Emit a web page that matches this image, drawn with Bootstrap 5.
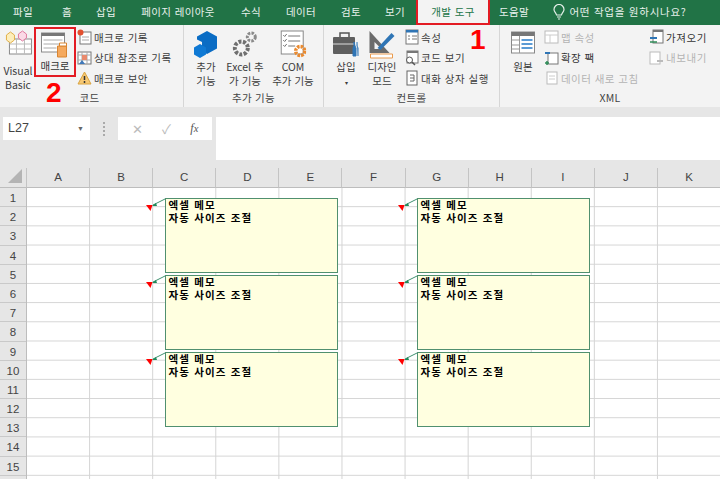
<!DOCTYPE html>
<html lang="ko"><head><meta charset="utf-8"><title>Excel 개발 도구</title>
<link href="https://cdn.jsdelivr.net/npm/bootstrap@5.3.0/dist/css/bootstrap.min.css" rel="stylesheet">
<style>
html,body{margin:0;width:720px;height:479px;overflow:hidden;background:#fff}
body{font-family:"Noto Sans CJK KR","Liberation Sans",sans-serif;font-size:10.5px;line-height:13px;color:#3c3c3c;position:relative}
.tabbar{height:25px;background:#217346;color:#e8f1ec;position:relative}
.tb{position:absolute;top:0;height:25px;line-height:23px;transform:translateX(-50%);white-space:nowrap;letter-spacing:.35px}
.tb-active{left:416px;width:74px;transform:none;background:#f3f3f3;color:#217346;border:2.5px solid #e31b23;border-top:0;text-align:center;line-height:23px;height:25px;z-index:2}
.tb-ask{letter-spacing:.75px}
.ribbon{height:82px;background:#f3f3f3;position:relative}
.grp{height:82px;border-right:1px solid #d6d6d6;position:relative;flex:none}
.grplabel{position:absolute;bottom:3px;left:0;right:0;text-align:center;color:#444;letter-spacing:.3px}
.bigb{position:absolute;top:5px;text-align:center;transform:translateX(-50%);white-space:nowrap;line-height:14px}
.bigb svg{display:block;margin:0 auto 1px}
.smalls{position:absolute;top:2px;display:flex;flex-direction:column;white-space:nowrap;letter-spacing:.45px}
.smalls>div{height:20.5px;display:flex;align-items:center;gap:2px}
.muted{color:#b3b3b3}
.fbar{height:61px;background:#e6e6e6;position:relative}
.fbox{position:absolute;top:10px;height:23px;background:#fff;display:flex;align-items:center}
.namebox{left:3px;width:87px;padding-left:5px;font-family:"Liberation Sans",sans-serif;font-size:12.5px;color:#444;justify-content:space-between;padding-right:6px}
.fnbox{left:118px;width:94px;justify-content:space-around;padding:0 4px;color:#aaa}
.finput{position:absolute;left:216px;right:0;top:10px;height:43px;background:#fff}
.dots{position:absolute;left:103px;top:15px;width:2px;height:14px;border-left:2px dotted #aaa}
.colhdr{display:grid;grid-template-columns:27px repeat(11,63.1px);height:20px;background:#e6e6e6;font-family:"Liberation Sans",sans-serif;font-size:11.5px;color:#444}
.colhdr>div{border-right:1px solid #c4c4c4;border-bottom:1px solid #bdbdbd;text-align:center;line-height:19px}
.sheet{display:flex;height:291px}
.rowhdr{width:27px;flex:none;background:#e6e6e6;border-right:1px solid #bdbdbd;font-family:"Liberation Sans",sans-serif;font-size:11.5px;color:#444}
.rowhdr>div{height:19.2px;line-height:20px;text-align:center;border-bottom:1px solid #c9c9c9}
.cells{flex:1;background-image:linear-gradient(to right,#d4d4d4 1px,transparent 1px),linear-gradient(to bottom,#d4d4d4 1px,transparent 1px);background-size:63.1px 19.2px;background-position:62.1px 18.2px}
.memos{position:absolute;left:147px;top:198px;display:grid;grid-template-columns:191px 191px;column-gap:61px;row-gap:2px}
.memo{position:relative;height:75px;margin-left:18px;background:#ffffe0;border:1.5px solid #50906f;color:#000;font-weight:700;padding:0 2.5px;line-height:13px;letter-spacing:1.15px;white-space:nowrap}
.memo svg{position:absolute;left:-20px;top:-1.5px}
.memotext{margin-top:-1px}
.mark1,.mark2{position:absolute;color:#f00;font-family:"Liberation Sans",sans-serif;font-weight:700;font-size:28px;line-height:28px;z-index:3}
.mark1{left:470px;top:26px}
.mark2{left:46px;top:79px}
.redbox{position:absolute;left:34px;top:27px;width:42px;height:50px;border:2px solid #e31b23;z-index:3}
</style></head><body>
<div class="tabbar">
<span class="tb" style="left:23px">파일</span><span class="tb" style="left:67px">홈</span><span class="tb" style="left:106px">삽입</span><span class="tb" style="left:178px">페이지 레이아웃</span><span class="tb" style="left:251px">수식</span><span class="tb" style="left:301px">데이터</span><span class="tb" style="left:351px">검토</span><span class="tb" style="left:395px">보기</span>
<div class="tb tb-active">개발 도구</div>
<span class="tb" style="left:514px">도움말</span>
<svg class="tb" style="left:559px;top:4px;height:16px" width="12" viewBox="0 0 12 16"><path d="M3.500 11C3 8.500 1 8 1 5.500a5 5 0 0 1 10 0C11 8 9 8.500 8.500 11zM4 13h4M5 15h2" fill="none" stroke="#e6f1ea" stroke-width="1.200"/></svg>
<span class="tb tb-ask" style="left:628px">어떤 작업을 원하시나요?</span>
</div>

<div class="ribbon d-flex">
 <div class="grp" style="width:184px">
  <div class="bigb" style="left:18px"><svg width="28" height="25" viewBox="0 0 28 25"><rect x="5" y="9" width="22" height="15" fill="#fff" stroke="#8a8a8a"/><path d="M5 14h22M5 19h22M12 9v15M20 9v15" stroke="#bbb"/><path d="M6 2l4 3v5l-4 3-4-3V5z" fill="#fdeebb" stroke="#e2b04a"/><path d="M18 1l4 3v4l-4 3-4-3V4z" fill="#fbd9e6" stroke="#e07ba0"/></svg><div style="margin-top:9px">Visual<br>Basic</div></div>
  <div class="bigb" style="left:55px"><svg width="28" height="28" viewBox="0 0 28 28"><rect x="1" y="3" width="23" height="19" fill="#fff" stroke="#8a8a8a"/><rect x="1" y="3" width="23" height="3" fill="#777"/><path d="M3 10h19M3 14h19M3 18h13" stroke="#aaa"/><path d="M17 16h9v11h-9z" fill="#f5a95e" stroke="#d98531"/><path d="M19 13h7v3h-7z" fill="#fff" stroke="#d98531"/></svg><div style="color:#333">매크로</div></div>
  <div class="smalls" style="left:77px">
   <div><svg width="15" height="16" viewBox="0 0 15 16"><rect x="3" y="3" width="11" height="12" fill="#fff" stroke="#777"/><path d="M5 8h7M5 11h7" stroke="#aaa"/><circle cx="3.500" cy="3.500" r="3" fill="#e2502f"/></svg><span>매크로 기록</span></div>
   <div><svg width="15" height="16" viewBox="0 0 15 16"><rect x="1" y="2" width="13" height="12" fill="#fff" stroke="#777"/><path d="M1 5h13M1 10h13M5 2v12M10 2v12" stroke="#aaa"/><rect x="5" y="5" width="5" height="5" fill="#e98a6d"/><path d="M2 14l3-4 3 4" fill="#3f78b9"/></svg><span>상대 참조로 기록</span></div>
   <div><svg width="15" height="16" viewBox="0 0 15 16"><path d="M7.500 2L14 14H1z" fill="#f7c873" stroke="#d9a441"/><path d="M7.500 6v4M7.500 11v2" stroke="#333" stroke-width="1.500"/></svg><span>매크로 보안</span></div>
  </div>
  <div class="grplabel" style="left:-4px">코드</div>
 </div>
 <div class="grp" style="width:140px">
  <div class="bigb" style="left:22px"><svg width="26" height="29" viewBox="0 0 26 29"><path d="M14 1l10 5.500v12L14 24 9 21V12L4 9.500V6.500z" fill="#0a6cc4"/><path d="M7 14l6 3.500v7L7 28l-6-3.500v-7z" fill="#0f79d4"/></svg><div>추가<br>기능</div></div>
  <div class="bigb" style="left:61px"><svg width="26" height="29" viewBox="0 0 26 29"><circle cx="9" cy="18" r="6.500" fill="none" stroke="#6f6f6f" stroke-width="4" stroke-dasharray="3 1.500"/><circle cx="19" cy="7" r="4" fill="none" stroke="#8a8a8a" stroke-width="3" stroke-dasharray="2.500 1.200"/></svg><div>Excel 추<br>가 기능</div></div>
  <div class="bigb" style="left:109px"><svg width="26" height="29" viewBox="0 0 26 29"><rect x="1" y="1" width="22" height="23" fill="#fff" stroke="#888"/><path d="M8 6h12M8 11h12M8 16h7M3 5l1.500 1.500L6.500 4M3 10l1.500 1.500L6.500 9M3 15l1.500 1.500L6.500 14" fill="none" stroke="#777"/><circle cx="20" cy="21" r="4.500" fill="none" stroke="#ea8a2f" stroke-width="3.500" stroke-dasharray="2.500 1"/></svg><div>COM<br>추가 기능</div></div>
  <div class="grplabel">추가 기능</div>
 </div>
 <div class="grp" style="width:176px">
  <div class="bigb" style="left:22px"><svg width="28" height="29" viewBox="0 0 28 29"><path d="M8 7V3h9v4" fill="none" stroke="#555" stroke-width="1.500"/><rect x="1" y="7" width="22" height="17" rx="1" fill="#5f5f5f"/><path d="M1 14h22" stroke="#ddd"/><path d="M22 12v4l-1 2v8h3v-8l-1-2zM25 12v4l1 2v8" fill="#2f75b5" stroke="#2f75b5"/></svg><div>삽입<br><span style="font-size:6px">▾</span></div></div>
  <div class="bigb" style="left:58px"><svg width="28" height="29" viewBox="0 0 28 29"><path d="M2 1v22h20z" fill="#6b6b6b"/><path d="M7 12v7h7z" fill="#f3f3f3"/><path d="M10 18L24 3l3 3L13 20z" fill="#2f75b5"/><path d="M3 24h22v4H3z" fill="#fff" stroke="#ea9a4c"/></svg><div>디자인<br>모드</div></div>
  <div class="smalls" style="left:81px;letter-spacing:.5px">
   <div><svg width="14" height="16" viewBox="0 0 14 16"><rect x="1" y="1" width="12" height="14" fill="#fff" stroke="#777"/><rect x="1" y="1" width="12" height="2.500" fill="#2f75b5"/><path d="M3 7h2M7 7h5M3 10h2M7 10h5" stroke="#777"/></svg><span>속성</span></div>
   <div><svg width="14" height="16" viewBox="0 0 14 16"><rect x="2" y="1" width="11" height="12" fill="#fff" stroke="#777"/><rect x="2" y="1" width="11" height="2" fill="#777"/><circle cx="4.500" cy="10" r="3" fill="#fff" stroke="#555"/><path d="M7 12l3 3" stroke="#555" stroke-width="1.500"/></svg><span>코드 보기</span></div>
   <div><svg width="14" height="16" viewBox="0 0 14 16"><rect x="2" y="1" width="10" height="14" fill="#fff" stroke="#666"/><path d="M5 5h4v6H5M5 8h4" fill="none" stroke="#666"/></svg><span>대화 상자 실행</span></div>
  </div>
  <div class="grplabel">컨트롤</div>
 </div>
 <div class="grp flex-grow-1" style="border:0">
  <div class="bigb" style="left:23px"><svg width="25" height="29" viewBox="0 0 25 29"><rect x="1" y="2" width="23" height="21" fill="#fff" stroke="#888"/><rect x="1" y="2" width="23" height="4" fill="#777"/><path d="M9 6v17M1 10h8M1 15h8M1 19h8" stroke="#999"/><path d="M11 10h11M11 14h11M11 18h11" stroke="#5b9bd5" stroke-width="2"/></svg><div>원본</div></div>
  <div class="smalls" style="left:44px">
   <div class="muted"><svg width="15" height="16" viewBox="0 0 15 16"><rect x="1" y="2" width="13" height="12" fill="#fff" stroke="#bbb"/><path d="M1 6h13M6 6v8" stroke="#ccc"/></svg><span>맵 속성</span></div>
   <div style="color:#333"><svg width="15" height="16" viewBox="0 0 15 16"><rect x="4" y="3" width="10" height="11" fill="#fff" stroke="#777"/><path d="M1 3h5" stroke="#2f75b5" stroke-width="2"/><path d="M3 11v4M1 13h4" stroke="#2e8b57" stroke-width="1.500"/></svg><span>확장 팩</span></div>
   <div class="muted"><svg width="15" height="16" viewBox="0 0 15 16"><rect x="3" y="2" width="10" height="12" fill="#fff" stroke="#bbb"/><path d="M5 6h6M5 9h6" stroke="#ccc"/></svg><span>데이터 새로 고침</span></div>
  </div>
  <div class="smalls" style="left:149px;letter-spacing:.6px">
   <div style="color:#333"><svg width="15" height="16" viewBox="0 0 15 16"><rect x="4" y="1" width="10" height="13" fill="#fff" stroke="#777"/><rect x="4" y="1" width="10" height="2" fill="#777"/><path d="M1 9h7" stroke="#2f75b5" stroke-width="2"/><path d="M1 13h7" stroke="#2e8b57" stroke-width="1.500"/></svg><span>가져오기</span></div>
   <div class="muted"><svg width="15" height="16" viewBox="0 0 15 16"><rect x="1" y="2" width="10" height="12" fill="#fff" stroke="#bbb"/><path d="M8 11h6" stroke="#bbb" stroke-width="2"/></svg><span>내보내기</span></div>
  </div>
  <div class="grplabel" style="right:auto;width:220px">XML</div>
 </div>
</div>

<div class="fbar">
 <div class="fbox namebox"><span>L27</span><span style="font-size:7px;color:#666">▼</span></div>
 <div class="dots"></div>
 <div class="fbox fnbox"><span style="font-size:13px;color:#bbb">✕</span><span style="font-size:13px;color:#bbb">✓</span><span style="font-family:'Liberation Serif',serif;font-style:italic;font-size:12px;color:#555">f<small>x</small></span></div>
 <div class="finput"></div>
</div>

<div class="colhdr">
 <div class="d-flex align-items-end justify-content-end pe-1 pb-1"><svg width="14" height="14" viewBox="0 0 14 14" class="d-block"><path d="M14 0v14H0z" fill="#b4b4b4"/></svg></div>
 <div>A</div><div>B</div><div>C</div><div>D</div><div>E</div><div>F</div><div>G</div><div>H</div><div>I</div><div>J</div><div>K</div>
</div>
<div class="sheet">
 <div class="rowhdr"><div>1</div><div>2</div><div>3</div><div>4</div><div>5</div><div>6</div><div>7</div><div>8</div><div>9</div><div>10</div><div>11</div><div>12</div><div>13</div><div>14</div><div>15</div></div>
 <div class="cells"></div>
</div>

<div class="memos">
 <div class="memo"><svg width="20" height="14" viewBox="0 0 20 14"><path d="M19 1L7 7" stroke="#3f9170" fill="none"/><path d="M6 8l4-3 1 3z" fill="#1f8a5a"/><path d="M0 7h6.500L4.500 13z" fill="#f00"/></svg><div class="memotext">엑셀 메모<br>자동 사이즈 조절</div></div>
 <div class="memo"><svg width="20" height="14" viewBox="0 0 20 14"><path d="M19 1L7 7" stroke="#3f9170" fill="none"/><path d="M6 8l4-3 1 3z" fill="#1f8a5a"/><path d="M0 7h6.500L4.500 13z" fill="#f00"/></svg><div class="memotext">엑셀 메모<br>자동 사이즈 조절</div></div>
 <div class="memo"><svg width="20" height="14" viewBox="0 0 20 14"><path d="M19 1L7 7" stroke="#3f9170" fill="none"/><path d="M6 8l4-3 1 3z" fill="#1f8a5a"/><path d="M0 7h6.500L4.500 13z" fill="#f00"/></svg><div class="memotext">엑셀 메모<br>자동 사이즈 조절</div></div>
 <div class="memo"><svg width="20" height="14" viewBox="0 0 20 14"><path d="M19 1L7 7" stroke="#3f9170" fill="none"/><path d="M6 8l4-3 1 3z" fill="#1f8a5a"/><path d="M0 7h6.500L4.500 13z" fill="#f00"/></svg><div class="memotext">엑셀 메모<br>자동 사이즈 조절</div></div>
 <div class="memo"><svg width="20" height="14" viewBox="0 0 20 14"><path d="M19 1L7 7" stroke="#3f9170" fill="none"/><path d="M6 8l4-3 1 3z" fill="#1f8a5a"/><path d="M0 7h6.500L4.500 13z" fill="#f00"/></svg><div class="memotext">엑셀 메모<br>자동 사이즈 조절</div></div>
 <div class="memo"><svg width="20" height="14" viewBox="0 0 20 14"><path d="M19 1L7 7" stroke="#3f9170" fill="none"/><path d="M6 8l4-3 1 3z" fill="#1f8a5a"/><path d="M0 7h6.500L4.500 13z" fill="#f00"/></svg><div class="memotext">엑셀 메모<br>자동 사이즈 조절</div></div>
</div>
<div class="redbox"></div>
<div class="mark1">1</div>
<div class="mark2">2</div>
<script src="https://cdn.jsdelivr.net/npm/bootstrap@5.3.0/dist/js/bootstrap.bundle.min.js"></script>
</body></html>
